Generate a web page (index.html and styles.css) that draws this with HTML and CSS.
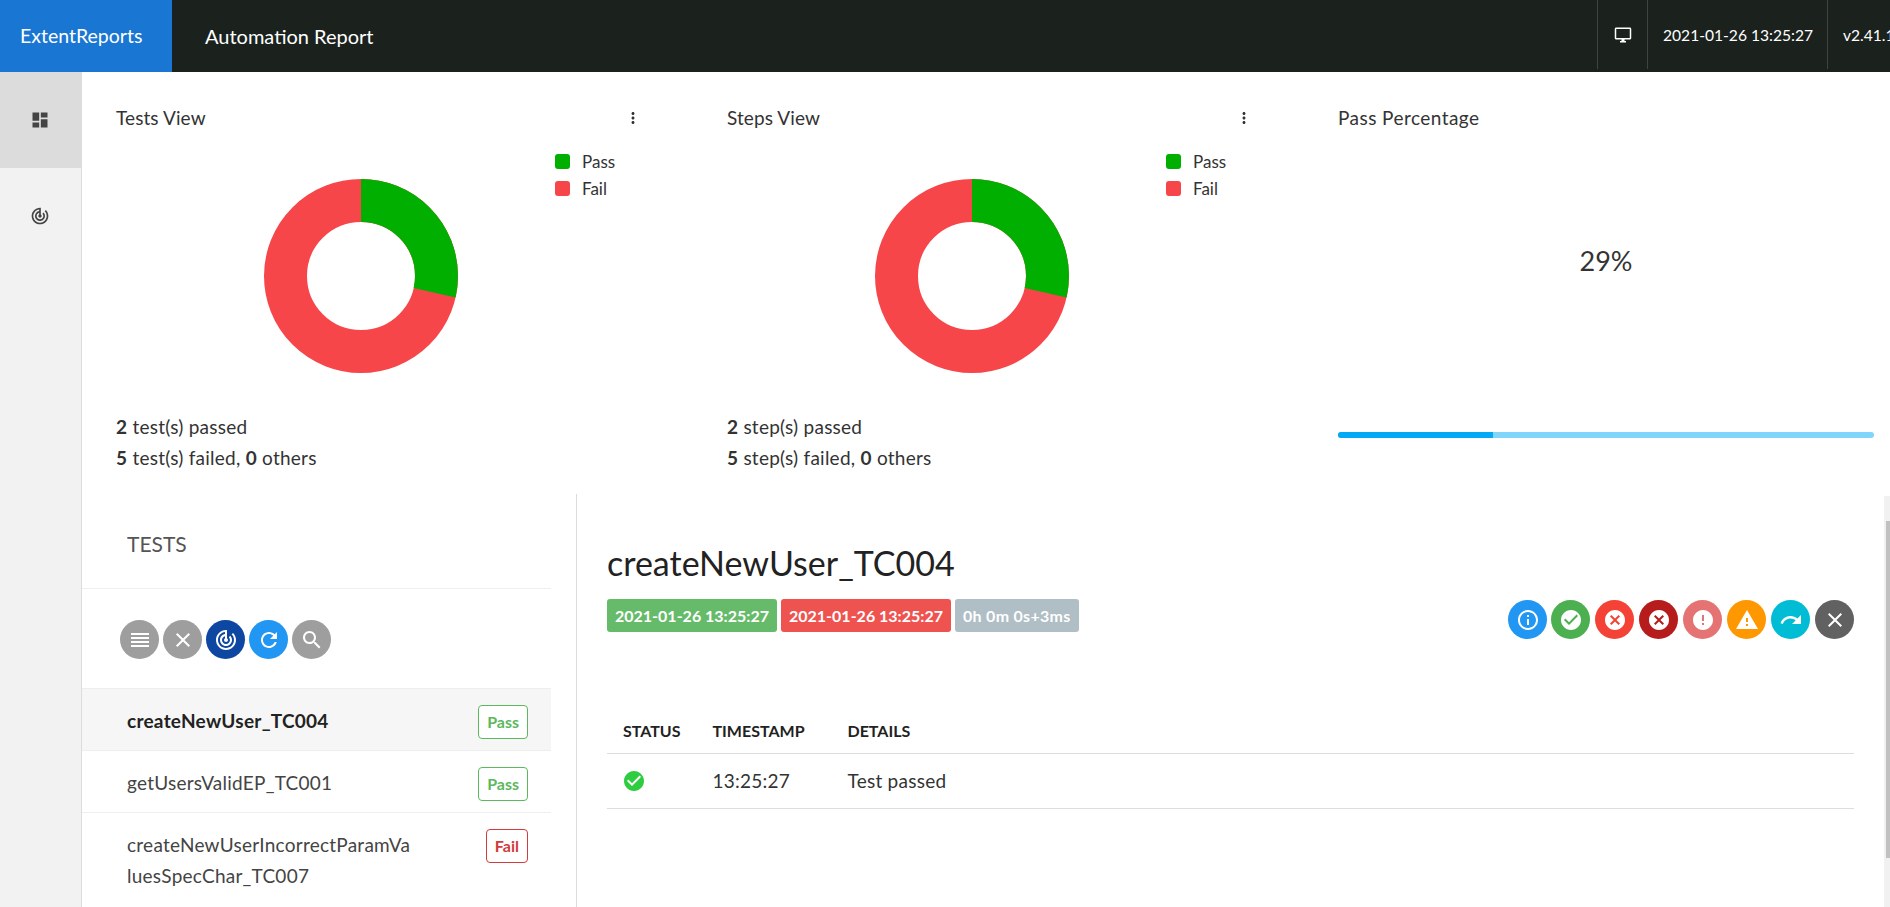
FILE: index.html
```html
<!DOCTYPE html>
<html lang="en">

<head>
    <meta charset="UTF-8">
    <meta name="viewport" content="width=device-width, initial-scale=1.0">
    <title>Automation Report</title>

    <link rel="icon" href="data:,">

    <link rel="stylesheet" href="styles.css">
</head>

<body>
    <svg class="sprite" xmlns="http://www.w3.org/2000/svg">
        <symbol id="i-dashboard" viewBox="0 0 24 24"><path d="M3 13h8V3H3v10zm0 8h8v-6H3v6zm10 0h8V11h-8v10zm0-18v6h8V3h-8z"/></symbol>
        <symbol id="i-track" viewBox="0 0 24 24"><path d="M19.07 4.93l-1.41 1.41C19.1 7.79 20 9.79 20 12c0 4.42-3.58 8-8 8s-8-3.58-8-8c0-4.08 3.05-7.44 7-7.93v2.02C8.16 6.57 6 9.03 6 12c0 3.31 2.69 6 6 6s6-2.69 6-6c0-1.66-.67-3.16-1.76-4.24l-1.41 1.41C15.55 9.9 16 10.9 16 12c0 2.21-1.79 4-4 4s-4-1.79-4-4c0-1.86 1.28-3.41 3-3.86v2.14c-.6.35-1 .98-1 1.72 0 1.1.9 2 2 2s2-.9 2-2c0-.74-.4-1.38-1-1.72V2h-1C6.48 2 2 6.48 2 12s4.48 10 10 10 10-4.48 10-10c0-2.76-1.12-5.26-2.93-7.07z"/></symbol>
        <symbol id="i-desktop" viewBox="0 0 24 24"><path d="M21 2H3c-1.1 0-2 .9-2 2v12c0 1.1.9 2 2 2h7v2H8v2h8v-2h-2v-2h7c1.1 0 2-.9 2-2V4c0-1.1-.9-2-2-2zm0 14H3V4h18v12z"/></symbol>
        <symbol id="i-more" viewBox="0 0 24 24"><path d="M12 8c1.1 0 2-.9 2-2s-.9-2-2-2-2 .9-2 2 .9 2 2 2zm0 2c-1.1 0-2 .9-2 2s.9 2 2 2 2-.9 2-2-.9-2-2-2zm0 6c-1.1 0-2 .9-2 2s.9 2 2 2 2-.9 2-2-.9-2-2-2z"/></symbol>
        <symbol id="i-reorder" viewBox="0 0 24 24"><path d="M3 15h18v-2H3v2zm0 4h18v-2H3v2zm0-8h18V9H3v2zm0-6v2h18V5H3z"/></symbol>
        <symbol id="i-clear" viewBox="0 0 24 24"><path d="M19 6.41L17.59 5 12 10.59 6.41 5 5 6.41 10.59 12 5 17.59 6.41 19 12 13.41 17.59 19 19 17.59 13.41 12z"/></symbol>
        <symbol id="i-refresh" viewBox="0 0 24 24"><path d="M17.65 6.35C16.2 4.9 14.21 4 12 4c-4.42 0-7.99 3.58-7.99 8s3.57 8 7.99 8c3.73 0 6.84-2.55 7.73-6h-2.08c-.82 2.33-3.04 4-5.65 4-3.31 0-6-2.69-6-6s2.69-6 6-6c1.66 0 3.14.69 4.22 1.78L13 11h7V4l-2.35 2.35z"/></symbol>
        <symbol id="i-search" viewBox="0 0 24 24"><path d="M15.5 14h-.79l-.28-.27C15.41 12.59 16 11.11 16 9.5 16 5.91 13.09 3 9.5 3S3 5.91 3 9.5 5.91 16 9.5 16c1.61 0 3.09-.59 4.23-1.57l.27.28v.79l5 4.99L20.49 19l-4.99-5zm-6 0C7.01 14 5 11.99 5 9.5S7.01 5 9.5 5 14 7.01 14 9.5 11.99 14 9.5 14z"/></symbol>
        <symbol id="i-info" viewBox="0 0 24 24"><path d="M11 17h2v-6h-2v6zm1-15C6.48 2 2 6.48 2 12s4.48 10 10 10 10-4.48 10-10S17.52 2 12 2zm0 18c-4.41 0-8-3.59-8-8s3.59-8 8-8 8 3.59 8 8-3.59 8-8 8zM11 9h2V7h-2v2z"/></symbol>
        <symbol id="i-check" viewBox="0 0 24 24"><path d="M12 2C6.48 2 2 6.48 2 12s4.48 10 10 10 10-4.48 10-10S17.52 2 12 2zm-2 15l-5-5 1.41-1.41L10 14.17l7.59-7.59L19 8l-9 9z"/></symbol>
        <symbol id="i-cancel" viewBox="0 0 24 24"><path d="M12 2C6.47 2 2 6.47 2 12s4.47 10 10 10 10-4.47 10-10S17.53 2 12 2zm5 13.59L15.59 17 12 13.41 8.41 17 7 15.59 10.59 12 7 8.41 8.41 7 12 10.59 15.59 7 17 8.41 13.41 12 17 15.59z"/></symbol>
        <symbol id="i-error" viewBox="0 0 24 24"><path d="M12 2C6.48 2 2 6.48 2 12s4.48 10 10 10 10-4.48 10-10S17.52 2 12 2zm1 15h-2v-2h2v2zm0-4h-2V7h2v6z"/></symbol>
        <symbol id="i-warning" viewBox="0 0 24 24"><path d="M1 21h22L12 2 1 21zm12-3h-2v-2h2v2zm0-4h-2v-4h2v4z"/></symbol>
        <symbol id="i-redo" viewBox="0 0 24 24"><path d="M18.4 10.6C16.55 8.99 14.15 8 11.5 8c-4.65 0-8.58 3.03-9.96 7.22L3.9 16c1.05-3.19 4.05-5.5 7.6-5.5 1.95 0 3.73.72 5.12 1.88L13 16h9V7l-3.6 3.6z"/></symbol>
    </svg>

    <header class="topbar">
        <div class="brand">ExtentReports</div>
        <div class="report-name">Automation Report</div>
        <div class="topbar-cell topbar-icon"><svg class="icon-18"><use href="#i-desktop"/></svg></div>
        <div class="topbar-cell topbar-date">2021-01-26 13:25:27</div>
        <div class="topbar-cell topbar-version">v2.41.1</div>
    </header>

    <div class="main">
        <nav class="sidebar">
            <div class="side-item active"><svg class="icon-20"><use href="#i-dashboard"/></svg></div>
            <div class="side-item"><svg class="icon-20"><use href="#i-track"/></svg></div>
        </nav>

        <div class="content">
            <section class="dashboard">
                <div class="card">
                    <div class="card-title">
                        <span>Tests View</span>
                        <svg class="icon-18 more"><use href="#i-more"/></svg>
                    </div>
                    <div class="chart-body">
                        <svg class="donut" viewBox="0 0 194 194">
                            <circle class="donut-fail" cx="97" cy="97" r="75.5" pathLength="7"/>
                            <circle class="donut-pass" cx="97" cy="97" r="75.5" pathLength="7"/>
                        </svg>
                        <ul class="legend">
                            <li><span class="swatch pass"></span>Pass</li>
                            <li><span class="swatch fail"></span>Fail</li>
                        </ul>
                    </div>
                    <div class="stats">
                        <div><b>2</b> test(s) passed</div>
                        <div><b>5</b> test(s) failed, <b>0</b> others</div>
                    </div>
                </div>

                <div class="card">
                    <div class="card-title">
                        <span>Steps View</span>
                        <svg class="icon-18 more"><use href="#i-more"/></svg>
                    </div>
                    <div class="chart-body">
                        <svg class="donut" viewBox="0 0 194 194">
                            <circle class="donut-fail" cx="97" cy="97" r="75.5" pathLength="7"/>
                            <circle class="donut-pass" cx="97" cy="97" r="75.5" pathLength="7"/>
                        </svg>
                        <ul class="legend">
                            <li><span class="swatch pass"></span>Pass</li>
                            <li><span class="swatch fail"></span>Fail</li>
                        </ul>
                    </div>
                    <div class="stats">
                        <div><b>2</b> step(s) passed</div>
                        <div><b>5</b> step(s) failed, <b>0</b> others</div>
                    </div>
                </div>

                <div class="card card-percent">
                    <div class="card-title">
                        <span>Pass Percentage</span>
                    </div>
                    <div class="percent">29%</div>
                    <div class="progress">
                        <div class="progress-fill" style="width: 29%"></div>
                    </div>
                </div>
            </section>

            <section class="tests">
                <div class="test-list">
                    <h5 class="list-title">TESTS</h5>
                    <div class="list-tools">
                        <span class="round grey"><svg class="icon-24"><use href="#i-reorder"/></svg></span>
                        <span class="round grey"><svg class="icon-24"><use href="#i-clear"/></svg></span>
                        <span class="round navy"><svg class="icon-24"><use href="#i-track"/></svg></span>
                        <span class="round blue"><svg class="icon-24"><use href="#i-refresh"/></svg></span>
                        <span class="round grey"><svg class="icon-24"><use href="#i-search"/></svg></span>
                    </div>
                    <ul class="rows">
                        <li class="row selected">
                            <span class="row-name">createNewUser_TC004</span>
                            <span class="tag tag-pass">Pass</span>
                        </li>
                        <li class="row">
                            <span class="row-name">getUsersValidEP_TC001</span>
                            <span class="tag tag-pass">Pass</span>
                        </li>
                        <li class="row">
                            <span class="row-name">createNewUserIncorrectParamValuesSpecChar_TC007</span>
                            <span class="tag tag-fail">Fail</span>
                        </li>
                    </ul>
                </div>

                <div class="test-detail">
                    <div class="detail-head">
                        <div>
                            <h4 class="detail-title">createNewUser_TC004</h4>
                            <div class="times">
                                <span class="time green">2021-01-26 13:25:27</span>
                                <span class="time red">2021-01-26 13:25:27</span>
                                <span class="time slate">0h 0m 0s+3ms</span>
                            </div>
                        </div>
                        <div class="status-tools">
                            <span class="round blue"><svg class="icon-24"><use href="#i-info"/></svg></span>
                            <span class="round st-pass"><svg class="icon-24"><use href="#i-check"/></svg></span>
                            <span class="round st-fail"><svg class="icon-24"><use href="#i-cancel"/></svg></span>
                            <span class="round st-fatal"><svg class="icon-24"><use href="#i-cancel"/></svg></span>
                            <span class="round st-error"><svg class="icon-24"><use href="#i-error"/></svg></span>
                            <span class="round st-warn"><svg class="icon-24"><use href="#i-warning"/></svg></span>
                            <span class="round st-skip"><svg class="icon-24"><use href="#i-redo"/></svg></span>
                            <span class="round st-clear"><svg class="icon-24"><use href="#i-clear"/></svg></span>
                        </div>
                    </div>

                    <table class="log">
                        <thead>
                            <tr>
                                <th class="col-status">STATUS</th>
                                <th class="col-time">TIMESTAMP</th>
                                <th>DETAILS</th>
                            </tr>
                        </thead>
                        <tbody>
                            <tr>
                                <td><svg class="log-check"><use href="#i-check"/></svg></td>
                                <td>13:25:27</td>
                                <td>Test passed</td>
                            </tr>
                        </tbody>
                    </table>
                </div>

                <div class="scrollbar">
                    <div class="scrollbar-thumb"></div>
                </div>
            </section>
        </div>
    </div>
</body>

</html>
```

FILE: styles.css
```css
* {
    box-sizing: border-box;
    margin: 0;
    padding: 0;
}

html,
body {
    height: 100%;
    overflow: hidden;
}

body {
    background: #fff;
    color: #333;
    font-family: Lato, "Noto Sans", sans-serif;
    font-size: 19px;
    letter-spacing: 0.25px;
}

ul {
    list-style: none;
}

svg {
    fill: currentColor;
    display: block;
}

.sprite {
    display: none;
}

.icon-18 {
    width: 18px;
    height: 18px;
}

.icon-20 {
    width: 20px;
    height: 20px;
}

.icon-24 {
    width: 24px;
    height: 24px;
}

/* top bar */
.topbar {
    height: 72px;
    background: #1b221e;
    color: #fff;
    display: flex;
    align-items: stretch;
    white-space: nowrap;
    letter-spacing: 0;
}

.brand {
    width: 172px;
    flex: none;
    background: #1976d2;
    font-size: 19.5px;
    line-height: 72px;
    padding-left: 20px;
}

.report-name {
    flex: 1;
    font-size: 20px;
    line-height: 72px;
    padding-left: 33px;
}

.topbar-cell {
    height: 69px;
    border-left: 1px solid #3e4441;
    font-size: 15.6px;
    display: flex;
    align-items: center;
    flex: none;
}

.topbar-icon {
    width: 50px;
    justify-content: center;
}

.topbar-date {
    width: 180px;
    padding-left: 15px;
}

.topbar-version {
    width: 63px;
    padding-left: 15px;
    overflow: hidden;
}

/* page */
.main {
    height: 835px;
    display: flex;
}

.sidebar {
    width: 82px;
    flex: none;
    background: #f2f2f2;
    border-right: 1px solid #ddd;
}

.side-item {
    height: 96px;
    padding-right: 2px;
    display: flex;
    align-items: center;
    justify-content: center;
    color: #444;
}

.side-item.active {
    background: #dcdcdc;
}

.content {
    flex: 1;
    min-width: 0;
    display: flex;
    flex-direction: column;
}

/* dashboard cards */
.dashboard {
    height: 422px;
    padding: 34px 16px 0 34px;
    display: grid;
    grid-template-columns: 611px 611px 536px;
    flex: none;
}

.card {
    width: 527px;
}

.card-percent {
    width: 536px;
}

.card-title {
    height: 24px;
    font-size: 19px;
    line-height: 24px;
    letter-spacing: 0.1px;
    display: flex;
    justify-content: space-between;
    align-items: center;
}

.card-percent .card-title {
    letter-spacing: 0.45px;
}

.more {
    color: #333;
    margin-right: 1px;
}

.chart-body {
    height: 219px;
    margin-top: 24px;
    padding-left: 148px;
    display: flex;
    align-items: flex-start;
}

.donut {
    width: 194px;
    height: 194px;
    margin-top: 25px;
    transform: rotate(-90deg);
    flex: none;
}

.donut circle {
    fill: none;
    stroke-width: 43;
}

.donut-fail {
    stroke: #f7464a;
}

.donut-pass {
    stroke: #00af00;
    stroke-dasharray: 2 5;
}

.legend {
    margin-left: 97px;
    font-size: 17px;
    letter-spacing: 0;
}

.legend li {
    height: 27px;
    display: flex;
    align-items: flex-start;
    line-height: 16px;
}

.swatch {
    width: 15px;
    height: 15px;
    border-radius: 3px;
    margin-right: 12px;
}

.swatch.pass {
    background: #00af00;
}

.swatch.fail {
    background: #f7464a;
}

.stats {
    margin-top: 38px;
    line-height: 31px;
}

.percent {
    margin-top: 101px;
    height: 60px;
    font-size: 27px;
    line-height: 60px;
    text-align: center;
    letter-spacing: 0;
}

.progress {
    margin-top: 141px;
    height: 6px;
    border-radius: 3px;
    background: #81d4fa;
    overflow: hidden;
}

.progress-fill {
    height: 100%;
    background: #03a9f4;
}

/* tests */
.tests {
    flex: 1;
    min-height: 0;
    display: flex;
}

.test-list {
    width: 469px;
    flex: none;
    margin-right: 25px;
}

.list-title {
    height: 95px;
    padding: 38px 0 0 45px;
    font-size: 21px;
    font-weight: 400;
    line-height: 24px;
    letter-spacing: 0;
    color: #555;
    border-bottom: 1px solid #eee;
}

.list-tools {
    height: 99px;
    padding: 31px 0 0 38px;
    display: flex;
    gap: 4px;
}

.round {
    width: 39px;
    height: 39px;
    border-radius: 50%;
    color: #fff;
    flex: none;
    display: flex;
    align-items: center;
    justify-content: center;
}

.grey {
    background: #9e9e9e;
}

.navy {
    background: #0d47a1;
}

.blue {
    background: #2196f3;
}

.rows {
    border-top: 1px solid #eee;
}

.row {
    display: flex;
    justify-content: space-between;
    align-items: flex-start;
    padding: 16px 23px 11px 45px;
    border-bottom: 1px solid #eee;
    color: #444;
    line-height: 31px;
}

.row:last-child {
    padding-bottom: 18px;
}

.row.selected {
    background: #f6f6f6;
    color: #222;
    font-weight: 700;
}

.row-name {
    width: 287px;
    overflow-wrap: anywhere;
}

.tag {
    height: 34px;
    padding: 0 8px;
    border: 1px solid;
    border-radius: 4px;
    font-size: 16px;
    font-weight: 700;
    line-height: 32px;
    letter-spacing: 0;
    background: #fff;
}

.tag-pass {
    color: #5cb85c;
}

.tag-fail {
    color: #d13c3c;
}

.test-detail {
    flex: 1;
    min-width: 0;
    border-left: 1px solid #ddd;
    padding: 48px 30px 0 30px;
}

.detail-head {
    display: flex;
    justify-content: space-between;
    align-items: flex-end;
}

.detail-title {
    font-size: 34px;
    font-weight: 400;
    line-height: 42px;
    letter-spacing: 0;
    color: #222;
}

.times {
    margin-top: 15px;
    display: flex;
    gap: 4px;
}

.time {
    height: 33px;
    padding: 0 8px;
    border-radius: 3px;
    color: #fff;
    font-size: 16px;
    font-weight: 700;
    line-height: 33px;
    letter-spacing: 0;
}

.green {
    background: #66bb6a;
}

.red {
    background: #ef5350;
}

.slate {
    background: #b0bec5;
    letter-spacing: 0.3px;
}

.status-tools {
    display: flex;
    gap: 5px;
    margin-bottom: -7px;
}

.status-tools .round:first-child {
    margin-right: -1px;
}

.st-pass {
    background: #4caf50;
}

.st-fail {
    background: #f44336;
}

.st-fatal {
    background: #b71c1c;
}

.st-error {
    background: #e57373;
}

.st-warn {
    background: #ff9800;
}

.st-skip {
    background: #00bcd4;
}

.st-clear {
    background: #616161;
}

.log {
    width: 100%;
    margin-top: 82px;
    border-collapse: collapse;
    text-align: left;
}

.log th {
    height: 39px;
    padding: 0 16px 6px;
    font-size: 16px;
    font-weight: 700;
    letter-spacing: 0;
    color: #222;
    border-bottom: 1px solid #ddd;
}

.log td {
    height: 55px;
    padding: 0 16px;
    border-bottom: 1px solid #ddd;
}

.col-status {
    width: 88px;
}

.col-time {
    width: 135px;
}

.log-check {
    width: 24px;
    height: 24px;
    margin-left: -1px;
    color: #2ecc40;
}

.scrollbar {
    width: 6px;
    flex: none;
    margin-top: 2px;
    padding: 25px 0 0 2px;
    background: #f1f1f1;
}

.scrollbar-thumb {
    height: 337px;
    background: #c1c1c1;
}
```
